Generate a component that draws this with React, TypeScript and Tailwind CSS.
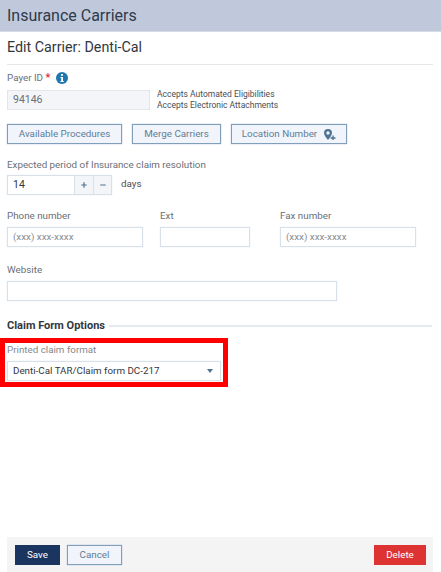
import { Minus, Plus } from 'lucide-react';

const labelCls = 'block text-[9.800px] leading-[14px] text-[#6b6f76]';
const inputCls = 'block h-[20px] border border-[#d8e0ea] shadow-[0_0_1px_#d8e0ea] bg-white px-[5px] text-[9.800px] leading-[18px] text-[#8a8e94]';
const secondaryBtn = 'h-[20px] flex items-center justify-center gap-[7px] border border-[#7f9fbb] bg-[#f1f4fb] text-[9.800px] text-[#5f7d97] shadow-[0_0_1px_#7f9fbb]';

function InfoDot() {
  return (
    <svg viewBox="0 0 12 12" className="ml-[6px] h-[12px] w-[12px]">
      <circle cx="6" cy="6" r="6" fill="#1f77ae" />
      <rect x="5" y="2" width="2" height="1.8" fill="#fff" />
      <path d="M4.4 5h2.6v4h.8v1H4.4V9h.8V6h-.8z" fill="#fff" />
    </svg>
  );
}

function PinPlus() {
  return (
    <svg viewBox="0 0 12 11" className="h-[11px] w-[12px]">
      <path
        fillRule="evenodd"
        d="M4 0a4 4 0 0 1 4 4c0 2.4-2.6 5.2-4 7C2.6 9.200 0 6.400 0 4a4 4 0 0 1 4-4zm0 2.300a1.700 1.700 0 1 0 0 3.400 1.700 1.700 0 0 0 0-3.400z"
        fill="#4f7391"
      />
      <path d="M8.300 6.500h1.400v1.800h1.800v1.400H9.700v1.300H8.300V9.700H6.500V8.300h1.800z" fill="#4f7391" />
    </svg>
  );
}

export default function App() {
  return (
    <div className="relative h-[572px] w-[441px] overflow-hidden bg-white font-['Roboto',sans-serif]">
      <header className="flex h-[31px] items-center bg-[#c0c9db] pl-[7px] text-[16px] text-[#2f3a4b] shadow-[0_1px_0_#d6dbe5]">
        Insurance Carriers
      </header>

      <main className="px-[7px]">
        <h1 className="mt-[7px] h-[27px] w-[426px] border-b border-[#e6e7e9] text-[14.300px] leading-[18px] text-[#33373d]">
          Edit Carrier: Denti-Cal
        </h1>

        <div className="mt-[6px] flex h-[14px] items-center">
          <span className="text-[9.800px] leading-[14px] text-[#6b6f76]">
            Payer ID <span className="text-[11px] font-medium text-[#e8262c]">*</span>
          </span>
          <InfoDot />
        </div>

        <div className="mt-[4px] flex items-center">
          <div className="h-[20px] w-[143px] border border-[#e4e6ea] bg-[#f4f5f8] px-[5px] text-[10.500px] leading-[18px] text-[#6b6f76]">
            94146
          </div>
          <div className="ml-[7px] text-[8.500px] leading-[10.500px] text-[#4a4e55]">
            <div>Accepts Automated Eligibilities</div>
            <div>Accepts Electronic Attachments</div>
          </div>
        </div>

        <div className="mt-[14px] flex gap-[10px]">
          <button className={`${secondaryBtn} w-[115px]`}>Available Procedures</button>
          <button className={`${secondaryBtn} w-[89px]`}>Merge Carriers</button>
          <button className={`${secondaryBtn} w-[116px]`}>
            Location Number
            <PinPlus />
          </button>
        </div>

        <label className={`${labelCls} mt-[14px]`}>Expected period of Insurance claim resolution</label>
        <div className="mt-[3px] flex items-center">
          <div className="flex h-[20px] w-[105px] border border-[#d8e0ea] shadow-[0_0_1px_#d8e0ea]">
            <span className="flex-1 px-[5px] text-[10.500px] leading-[18px] text-[#33373d]">14</span>
            <span className="flex w-[19px] items-center justify-center border-l border-[#d8e0ea] bg-[#f4f5f8]">
              <Plus className="h-[8px] w-[8px] text-[#4f7391]" strokeWidth={3.5} />
            </span>
            <span className="flex w-[18px] items-center justify-center border-l border-[#d8e0ea] bg-[#f4f5f8]">
              <Minus className="h-[8px] w-[8px] text-[#4f7391]" strokeWidth={3.5} />
            </span>
          </div>
          <span className="mb-[2px] ml-[9px] text-[9.800px] text-[#4a4e55]">days</span>
        </div>

        <div className="mt-[14px] flex">
          <div className="w-[153px]">
            <label className={labelCls}>Phone number</label>
            <div className={`${inputCls} mt-[4px] w-[136px]`}>(xxx) xxx-xxxx</div>
          </div>
          <div className="w-[120px]">
            <label className={labelCls}>Ext</label>
            <div className={`${inputCls} mt-[4px] w-[90px]`} />
          </div>
          <div>
            <label className={labelCls}>Fax number</label>
            <div className={`${inputCls} mt-[4px] w-[136px]`}>(xxx) xxx-xxxx</div>
          </div>
        </div>

        <label className={`${labelCls} mt-[16px]`}>Website</label>
        <div className={`${inputCls} mt-[4px] w-[330px]`} />

        <div className="mt-[18px] flex h-[14px] w-[425px] items-center gap-[4px]">
          <span className="text-[11px] font-bold text-[#33373d]">Claim Form Options</span>
          <span className="h-[2px] flex-1 bg-[#e6e9f0]" />
        </div>

        <label className="mt-[10px] block text-[9.800px] leading-[14px] text-[#85898f]">Printed claim format</label>
        <div className="mt-[4px] flex h-[20px] w-[214px] items-center justify-between border border-[#d8e0ea] shadow-[0_0_1px_#d8e0ea] bg-white pl-[5px] pr-[7px] text-[9.800px] text-[#33373d]">
          Denti-Cal TAR/Claim form DC-217
          <span className="h-0 w-0 border-x-[3px] border-t-[4px] border-x-transparent border-t-[#4f7391]" />
        </div>
      </main>

      {/* red annotation drawn over the screenshot */}
      <div className="pointer-events-none absolute left-0 top-[338px] h-[49px] w-[228px] border-[5px] border-[#ff0000]" />

      <footer className="absolute bottom-0 left-[7px] flex h-[35px] w-[426px] items-center gap-[7px] bg-[#f4f4f5] pl-[8px] pr-[7px] pt-[1px]">
        <button className="h-[20px] w-[45px] bg-[#1a355f] text-[9.800px] text-white">Save</button>
        <button className={`${secondaryBtn} w-[55px]`}>Cancel</button>
        <button className="ml-auto h-[20px] w-[52px] bg-[#dd3333] text-[9.800px] text-white">Delete</button>
      </footer>
    </div>
  );
}
